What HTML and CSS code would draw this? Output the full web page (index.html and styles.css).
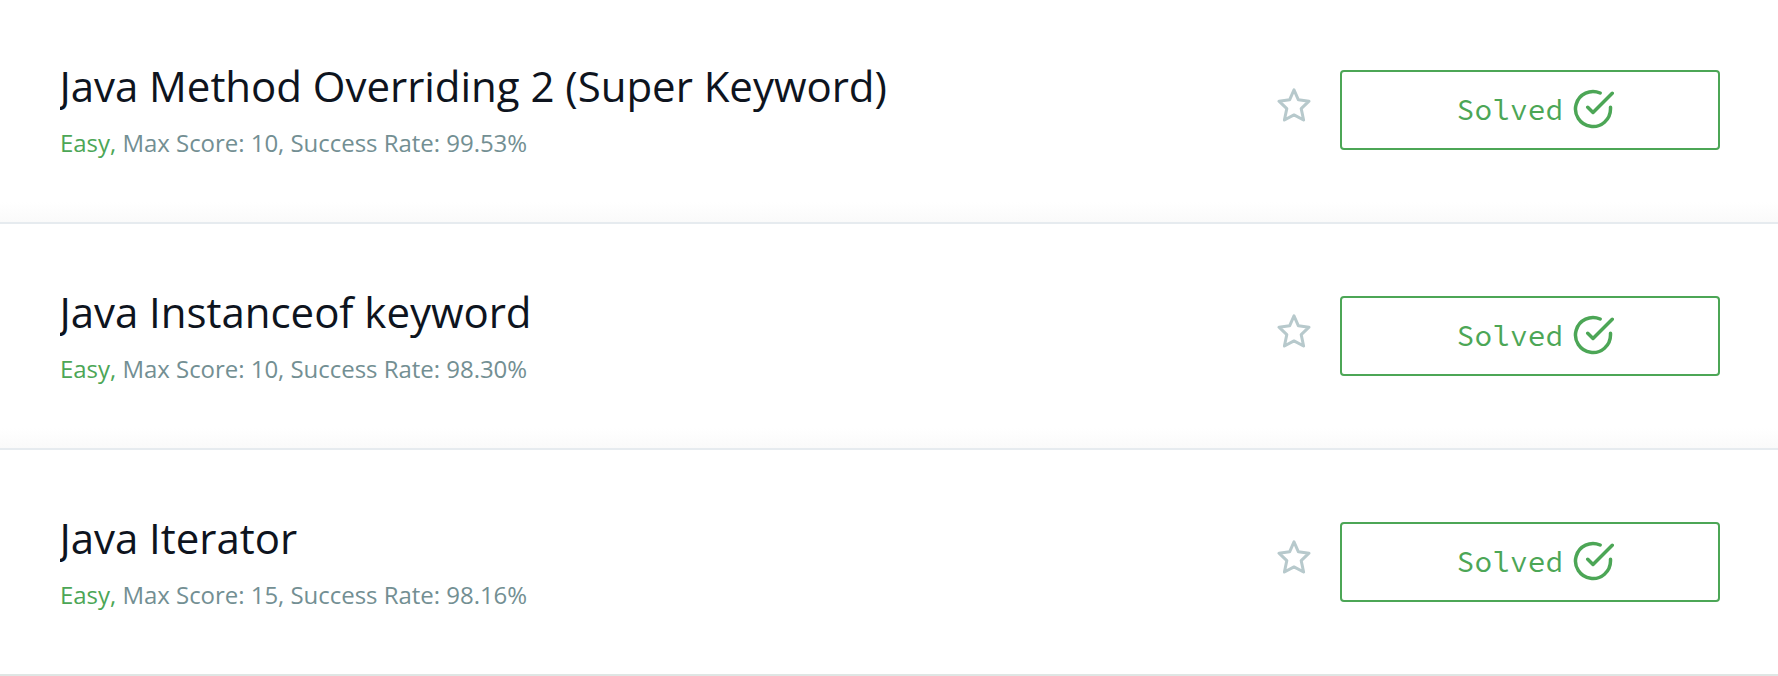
FILE: index.html
```html
<!DOCTYPE html>
<html lang="en">
<head>
<meta charset="utf-8">
<title>Java Challenges</title>
<link rel="stylesheet" href="styles.css">
</head>
<body>
<svg class="defs" aria-hidden="true">
  <symbol id="star" viewBox="0 0 36 36"><path d="M18 3.8 22.4 13.8 33 15.2 25.2 22.6 27.6 34 18 28.9 8.4 34 10.8 22.6 3 15.2 13.6 13.8Z"/></symbol>
  <symbol id="check" viewBox="0 0 24 24"><path d="M22 11.07V12a10 10 0 1 1-5.93-9.14M23 3 12 14l-3-3"/></symbol>
</svg>
<main class="list">
  <article class="row">
    <div class="info"><h2 class="title">Java Method Overriding 2 (Super Keyword)</h2><p class="meta"><span class="easy">Easy,</span> Max Score: 10, Success Rate: 99.53%</p></div>
    <svg class="star"><use href="#star"/></svg>
    <button class="solved"><span class="label">Solved</span><svg class="check"><use href="#check"/></svg></button>
  </article>
  <article class="row">
    <div class="info"><h2 class="title">Java Instanceof keyword</h2><p class="meta"><span class="easy">Easy,</span> Max Score: 10, Success Rate: 98.30%</p></div>
    <svg class="star"><use href="#star"/></svg>
    <button class="solved"><span class="label">Solved</span><svg class="check"><use href="#check"/></svg></button>
  </article>
  <article class="row">
    <div class="info"><h2 class="title">Java Iterator</h2><p class="meta"><span class="easy">Easy,</span> Max Score: 15, Success Rate: 98.16%</p></div>
    <svg class="star"><use href="#star"/></svg>
    <button class="solved"><span class="label">Solved</span><svg class="check"><use href="#check"/></svg></button>
  </article>
</main>
</body>
</html>
```
FILE: styles.css
```css
* { box-sizing: border-box; }
body { margin: 0; background: #fff; font-family: "Open Sans", sans-serif; }
.defs { display: none; }
.list { height: 676px; overflow: hidden; }
.row {
  display: flex;
  align-items: flex-start;
  height: 226px;
  padding: 72px 58px 0 60px;
  border-bottom: 2px solid #e6ebef;
  background: linear-gradient(#fff 204px, #fafafa 224px);
}
.row:first-child { height: 224px; padding-top: 70px; background: linear-gradient(#fff 202px, #fafafa 222px); }
.row:last-child { border-color: #dfe6e4; background: #fff; }
.info { flex: 1; }
.title { margin: -12px 0 0; overflow: hidden; text-indent: -0.6px; letter-spacing: -0.03px; font-size: 42px; line-height: 56px; font-weight: 400; color: #0e141e; white-space: nowrap; }
.meta { margin: 12px 0 0; font-size: 24px; line-height: 34px; color: #738f93; white-space: nowrap; letter-spacing: -0.03px; }
.easy { color: #4ca656; }
.star { width: 36px; height: 36px; margin: 16px 28px 0 0; fill: none; stroke: #b7c9cc; stroke-width: 3; stroke-linejoin: round; }
.solved {
  display: flex;
  align-items: center;
  justify-content: center;
  width: 380px;
  height: 80px;
  padding: 0 0 0 11px;
  border: 2px solid #4ca656;
  border-radius: 4px;
  background: #fff;
  color: #4ca656;
}
.label { font: 29.5px/40px "Source Code Pro", "Noto Sans Mono", "DejaVu Sans Mono", monospace; letter-spacing: 0.1px; }
.check { width: 42px; height: 42px; margin: 0 0 2px 9px; fill: none; stroke: currentColor; stroke-width: 2; stroke-linecap: round; stroke-linejoin: round; overflow: visible; }
```
